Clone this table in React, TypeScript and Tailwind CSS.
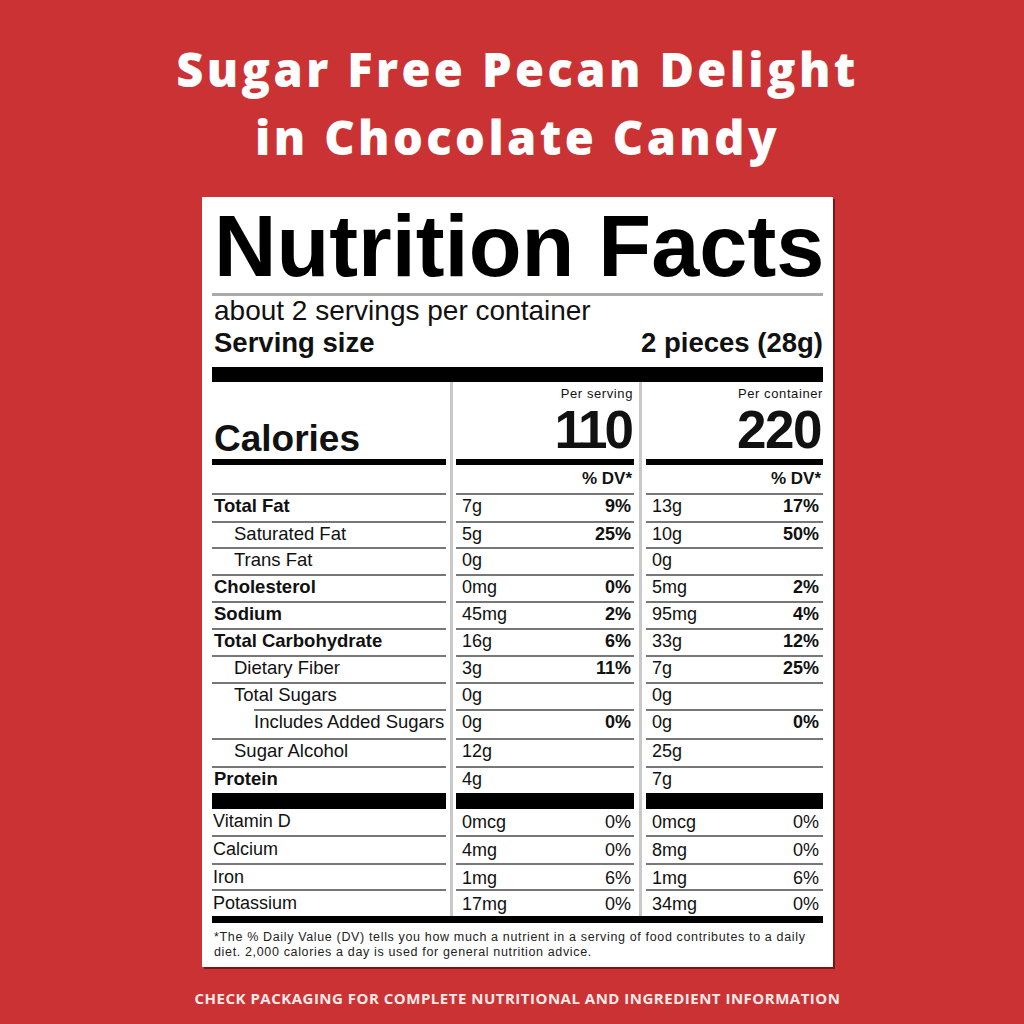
import React from "react";

const LBL = "font-['Liberation_Sans',Arial,Helvetica,sans-serif]";

type Nut = {
  n: string;
  b?: boolean;
  ind: string;
  li: string;
  h: string;
  a: string;
  ap: string;
  c: string;
  cp: string;
};

const nutrients: Nut[] = [
  { n: "Total Fat", b: true, ind: "", li: "", h: "h-[26px]", a: "7g", ap: "9%", c: "13g", cp: "17%" },
  { n: "Saturated Fat", ind: "pl-[22px]", li: "", h: "h-[24px]", a: "5g", ap: "25%", c: "10g", cp: "50%" },
  { n: "Trans Fat", ind: "pl-[22px]", li: "", h: "h-[25px]", a: "0g", ap: "", c: "0g", cp: "" },
  { n: "Cholesterol", b: true, ind: "", li: "", h: "h-[25px]", a: "0mg", ap: "0%", c: "5mg", cp: "2%" },
  { n: "Sodium", b: true, ind: "", li: "", h: "h-[25px]", a: "45mg", ap: "2%", c: "95mg", cp: "4%" },
  { n: "Total Carbohydrate", b: true, ind: "", li: "", h: "h-[25px]", a: "16g", ap: "6%", c: "33g", cp: "12%" },
  { n: "Dietary Fiber", ind: "pl-[22px]", li: "", h: "h-[25px]", a: "3g", ap: "11%", c: "7g", cp: "25%" },
  { n: "Total Sugars", ind: "pl-[22px]", li: "", h: "h-[25px]", a: "0g", ap: "", c: "0g", cp: "" },
  { n: "Includes Added Sugars", ind: "pl-[42px]", li: "ml-[42px]", h: "h-[27px]", a: "0g", ap: "0%", c: "0g", cp: "0%" },
  { n: "Sugar Alcohol", ind: "pl-[22px]", li: "", h: "h-[26px]", a: "12g", ap: "", c: "25g", cp: "" },
  { n: "Protein", b: true, ind: "", li: "", h: "h-[25px]", a: "4g", ap: "", c: "7g", cp: "" },
];

const vitamins = [
  { n: "Vitamin D", h: "h-[26px]", a: "0mcg", ap: "0%", c: "0mcg", cp: "0%", line: true },
  { n: "Calcium", h: "h-[26px]", a: "4mg", ap: "0%", c: "8mg", cp: "0%", line: true },
  { n: "Iron", h: "h-[24px]", a: "1mg", ap: "6%", c: "1mg", cp: "6%", line: true },
  { n: "Potassium", h: "h-[25px]", a: "17mg", ap: "0%", c: "34mg", cp: "0%", line: false },
];

function Div1() {
  return (
    <div className="w-[10px] flex justify-center self-stretch">
      <div className="w-[3px] bg-[#c9c9c9]" />
    </div>
  );
}
function Div2() {
  return (
    <div className="w-[12px] flex justify-center self-stretch">
      <div className="w-[3px] bg-[#c9c9c9]" />
    </div>
  );
}

function Line({ extra = "" }: { extra?: string }) {
  return <div className={`h-[2px] bg-[#777777] ${extra}`} />;
}

export default function App() {
  return (
    <div className="w-[1024px] h-[1024px] bg-[#cb3234] flex flex-col items-center pl-[11px] pt-[35px]">
      <h1 className="font-['Open_Sans',sans-serif] font-extrabold text-white text-[47px] leading-[68px] text-center tracking-[3.4px] whitespace-nowrap">
        Sugar Free Pecan Delight
        <br />
        in Chocolate Candy
      </h1>

      <div
        className={`${LBL} mt-[26px] w-[631px] bg-white text-[#111] px-[10px] pt-[6px] pb-[7px] shadow-[2px_2px_0_0_rgba(90,10,10,0.7)]`}
      >
        <div className="text-[86.5px] leading-[86px] h-[86px] font-bold text-black pl-[2px] whitespace-nowrap">
          Nutrition Facts
        </div>
        <div className="mt-[4px] h-[3px] bg-[#aaaaaa]" />
        <div className="text-[28px] leading-[30px] h-[30px] pl-[2px] whitespace-nowrap">about 2 servings per container</div>
        <div className="flex justify-between font-bold text-[27.5px] leading-[34px] h-[34px] pl-[2px]">
          <span>Serving size</span>
          <span>2 pieces (28g)</span>
        </div>
        <div className="mt-[7px] h-[15px] bg-black" />

        {/* Calories header */}
        <div className="flex h-[77px]">
          <div className="w-[234px] flex flex-col justify-end pb-[2px] pl-[2px]">
            <div className="text-[37px] leading-[36px] font-bold">Calories</div>
          </div>
          <Div1 />
          <div className="w-[178px] flex flex-col justify-between items-end pt-[5px] pb-[7px]">
            <div className="text-[13px] leading-[14px] tracking-[0.6px] pr-[1px]">Per serving</div>
            <div className="text-[53px] leading-[44px] font-bold tracking-[-3px] pr-[3px]">110</div>
          </div>
          <Div2 />
          <div className="w-[177px] flex flex-col justify-between items-end pt-[5px] pb-[7px]">
            <div className="text-[13px] leading-[14px] tracking-[0.6px]">Per container</div>
            <div className="text-[53px] leading-[44px] font-bold tracking-[-1.5px] pr-[2px]">220</div>
          </div>
        </div>
        <div className="flex h-[6px]">
          <div className="w-[234px] bg-black" />
          <Div1 />
          <div className="w-[178px] bg-black" />
          <Div2 />
          <div className="w-[177px] bg-black" />
        </div>
        <div className="flex h-[28px]">
          <div className="w-[234px]" />
          <Div1 />
          <div className="w-[178px] flex justify-end items-center pr-[2px] text-[17px] font-bold">% DV*</div>
          <Div2 />
          <div className="w-[177px] flex justify-end items-center pr-[2px] text-[17px] font-bold">% DV*</div>
        </div>

        {nutrients.map((r) => (
          <div key={r.n} className="flex">
            <div className="w-[234px]">
              <Line extra={r.li} />
              <div className={`${r.h} ${r.ind} text-[18.5px] leading-[22px] whitespace-nowrap pl-[2px] ${r.b ? "font-bold" : ""}`}>
                {r.n}
              </div>
            </div>
            <Div1 />
            <div className="w-[178px]">
              <Line />
              <div className={`${r.h} flex justify-between pl-[6px] pr-[3px] text-[18px] leading-[22px]`}>
                <span>{r.a}</span>
                <span className="font-bold">{r.ap}</span>
              </div>
            </div>
            <Div2 />
            <div className="w-[177px]">
              <Line />
              <div className={`${r.h} flex justify-between pl-[6px] pr-[4px] text-[18px] leading-[22px]`}>
                <span>{r.c}</span>
                <span className="font-bold">{r.cp}</span>
              </div>
            </div>
          </div>
        ))}

        <div className="flex h-[16px]">
          <div className="w-[234px] bg-black" />
          <Div1 />
          <div className="w-[178px] bg-black" />
          <Div2 />
          <div className="w-[177px] bg-black" />
        </div>

        {vitamins.map((r) => (
          <div key={r.n} className="flex">
            <div className="w-[234px]">
              <div className={`${r.h} text-[18px] leading-[24px] pl-[1px]`}>{r.n}</div>
              {r.line && <Line />}
            </div>
            <Div1 />
            <div className="w-[178px]">
              <div className={`${r.h} flex justify-between pl-[6px] pr-[3px] text-[18px] leading-[26px]`}>
                <span>{r.a}</span>
                <span>{r.ap}</span>
              </div>
              {r.line && <Line />}
            </div>
            <Div2 />
            <div className="w-[177px]">
              <div className={`${r.h} flex justify-between pl-[6px] pr-[4px] text-[18px] leading-[26px]`}>
                <span>{r.c}</span>
                <span>{r.cp}</span>
              </div>
              {r.line && <Line />}
            </div>
          </div>
        ))}

        <div className="h-[7px] bg-black" />
        <div className="mt-[7px] text-[12.5px] leading-[15px] text-[#222] tracking-[0.65px] whitespace-nowrap pl-[2px]">
          *The % Daily Value (DV) tells you how much a nutrient in a serving of food contributes to a daily
          <br />
          diet. 2,000 calories a day is used for general nutrition advice.
        </div>
      </div>

      <div className="mt-[21px] font-['Open_Sans',sans-serif] font-bold text-[15px] leading-[20px] text-[#fbe9e9] tracking-[0.5px] whitespace-nowrap">
        CHECK PACKAGING FOR COMPLETE NUTRITIONAL AND INGREDIENT INFORMATION
      </div>
    </div>
  );
}
